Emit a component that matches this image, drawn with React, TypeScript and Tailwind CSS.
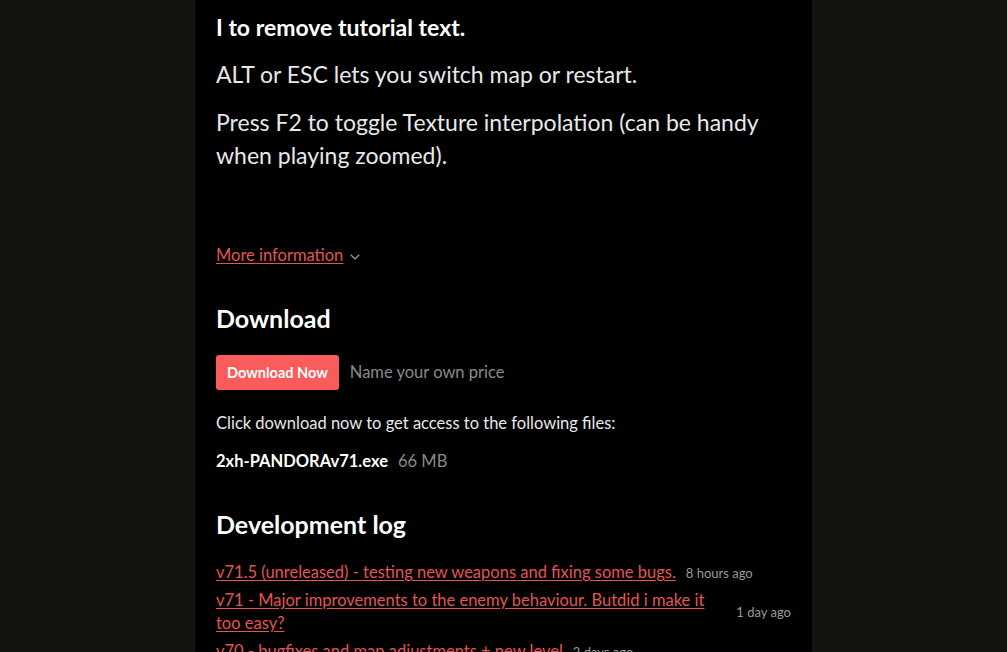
import { ChevronDown } from "lucide-react";

const logs = [
  { title: "v71.5 (unreleased) - testing new weapons and fixing some bugs.", when: "8 hours ago" },
  { title: "v71 - Major improvements to the enemy behaviour. Butdid i make it too easy?", when: "1 day ago" },
  { title: "v70 - bugfixes and map adjustments + new level", when: "2 days ago" },
];

export default function App() {
  return (
    <div className="h-[652px] overflow-hidden bg-[#11150e] font-['Lato','Liberation_Sans',sans-serif]">
      <div className="ml-[195px] h-full w-[617px] bg-black px-[21px] pt-[11px] text-[#e8e8e8]">
        <p className="text-[23px] font-bold leading-[33px] text-white">I to remove tutorial text.</p>
        <p className="mt-[14px] text-[23px] leading-[33px]">ALT or ESC lets you switch map or restart.</p>
        <p className="mt-[15px] text-[23px] leading-[33px]">
          Press F2 to toggle Texture interpolation (can be handy when playing zoomed).
        </p>

        <div className="mt-[71px] flex items-center text-[16.5px] leading-6">
          <a className="text-[#e25555] underline underline-offset-2">More information</a>
          <ChevronDown className="ml-1 mt-[3px] h-4 w-4 text-[#9a9a9a]" strokeWidth={1.75} />
        </div>

        <h2 className="mt-[36px] text-[25px] font-bold leading-[31px] text-white">Download</h2>
        <div className="mt-[21px] flex items-center">
          <button className="h-[35px] rounded-[3px] bg-[#fa5c5c] px-[11px] text-[14.5px] font-bold text-white">
            Download Now
          </button>
          <span className="ml-[11px] text-[16.5px] text-[#8a8a8a]">Name your own price</span>
        </div>
        <p className="mt-[21px] text-[16.5px] leading-6">Click download now to get access to the following files:</p>
        <div className="mt-[14px] flex items-center text-[16.5px] leading-6">
          <strong className="font-bold text-white">2xh-PANDORAv71.exe</strong>
          <span className="ml-[10px] text-[#8a8a8a]">66 MB</span>
        </div>

        <h2 className="mt-[36px] text-[25px] font-bold leading-[31px] text-white">Development log</h2>
        <div className="mt-[21px] flex flex-col gap-[5px]">
          {logs.map((log) => (
            <div key={log.title} className="flex items-center">
              <a className="text-[16.5px] leading-[23px] text-[#e25555] underline underline-offset-2">{log.title}</a>
              <span className="ml-[10px] mt-[2px] shrink-0 whitespace-nowrap text-[13px] text-[#9a9a9a]">{log.when}</span>
            </div>
          ))}
        </div>
      </div>
    </div>
  );
}
